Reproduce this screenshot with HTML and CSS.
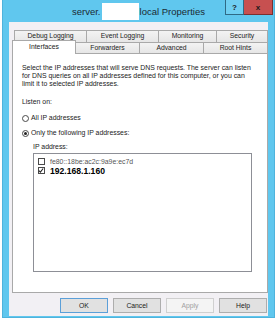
FILE: index.html
```html
<!DOCTYPE html>
<html lang="en">
<head>
  <meta charset="UTF-8">
  <title>server.local Properties</title>
  <link rel="stylesheet" href="styles.css">
</head>
<body>
  <div class="window">
    <div class="titlebar">
      <span></span>
      <div class="title">server.<span class="redact"></span>local Properties</div>
      <div class="caption-btns">
        <span class="cap cap-help">?</span>
        <span class="cap cap-close">x</span>
      </div>
    </div>

    <div class="panel">
      <div class="tabs">
        <div class="tab-row back">
          <div class="tab w-debug">Debug Logging</div>
          <div class="tab w-event">Event Logging</div>
          <div class="tab w-monitor">Monitoring</div>
          <div class="tab w-security">Security</div>
        </div>
        <div class="tab-row front">
          <div class="tab w-iface selected">Interfaces</div>
          <div class="tab w-fwd">Forwarders</div>
          <div class="tab w-adv">Advanced</div>
          <div class="tab w-root">Root Hints</div>
        </div>
      </div>

      <div class="page">
        <p class="intro">Select the IP addresses that will serve DNS requests. The server can listen<br>for DNS queries on all IP addresses defined for this computer, or you can<br>limit it to selected IP addresses.</p>
        <div class="listen">Listen on:</div>
        <div class="radio-row"><span class="radio"></span>All IP addresses</div>
        <div class="radio-row"><span class="radio on"></span>Only the following IP addresses:</div>
        <div class="ip-block">
          <div class="ip-label">IP address:</div>
          <div class="listbox">
            <div class="ip-row dim"><span class="check"></span>fe80::18be:ac2c:9a9e:ec7d</div>
            <div class="ip-row strong">
              <span class="check"><svg width="7" height="7" viewBox="0 0 7 7"><path d="M1 3.6 L2.8 5.4 L6 1.2" fill="none" stroke="#222" stroke-width="1.2"/></svg></span>192.168.1.160
            </div>
          </div>
        </div>
      </div>

      <div class="buttons">
        <button class="btn default">OK</button>
        <button class="btn">Cancel</button>
        <button class="btn" disabled>Apply</button>
        <button class="btn">Help</button>
      </div>
    </div>
  </div>
</body>
</html>
```

FILE: styles.css
```css
* {
  box-sizing: border-box;
}
body {
  margin: 0;
  background: #fff;
  font-family: 'Liberation Sans', Arial, sans-serif;
  color: #222;
}
.window {
  margin-left: 2px;
  width: 273px;
  height: 318px;
  background: #60c7ee;
  border: 1px solid #4fb3dc;
  border-top: none;
}
.titlebar {
  height: 22px;
  display: grid;
  grid-template-columns: 1fr auto 1fr;
  align-items: start;
}
.title {
  margin-top: 3px;
  font-size: 9.5px;
  line-height: 17px;
  color: #1b2a33;
  white-space: nowrap;
  display: flex;
  align-items: center;
}
.redact {
  display: inline-block;
  width: 37px;
  height: 17px;
  margin: 0 1px;
  background: #fff;
}
.caption-btns {
  justify-self: end;
  display: flex;
  margin-right: 1px;
}
.cap {
  height: 15px;
  display: flex;
  align-items: center;
  justify-content: center;
  font-size: 8px;
  font-weight: bold;
  color: #1a1a1a;
}
.cap-help {
  width: 19px;
  background: #6fcff2;
  border: 1px solid #2f6a86;
  border-top: none;
}
.cap-close {
  width: 29px;
  background: #c75050;
  border: 1px solid #7c2f2f;
  border-top: none;
  border-left: none;
}
.panel {
  margin: 0 6px;
  height: 294px;
  background: #f2f0f4;
  padding: 8px 0 0 3px;
}
.tabs {
  height: 23px;
  display: flex;
  flex-direction: column;
}
.tab-row {
  display: flex;
}
.tab-row.back {
  height: 12px;
  margin-left: 2px;
}
.tab-row.front {
  height: 11px;
  align-items: flex-end;
}
.tab {
  height: 100%;
  font-size: 6.8px;
  line-height: 10px;
  text-align: center;
  white-space: nowrap;
  background: linear-gradient(#f3f3f3, #e6e6e6);
  border: 1px solid #a9a9a9;
  border-left: none;
  border-bottom: none;
  color: #222;
}
.tab-row .tab:first-child {
  border-left: 1px solid #a9a9a9;
}
.w-debug { width: 73px; }
.w-event { width: 72px; }
.w-monitor { width: 58px; }
.w-security { width: 51px; }
.w-iface { width: 64px; }
.w-fwd { width: 64px; }
.w-adv { width: 64px; }
.w-root { width: 64px; }
.tab.selected {
  height: 14px;
  margin-bottom: -1px;
  position: relative;
  z-index: 1;
  background: #fff;
  line-height: 11px;
}
.page {
  width: 256px;
  height: 240px;
  background: #fff;
  border: 1px solid #a9a9a9;
  padding: 10px 9px 0 9px;
  font-size: 6.9px;
  line-height: 8px;
}
.intro {
  margin: 0;
  white-space: nowrap;
}
.listen {
  margin-top: 10px;
}
.radio-row {
  margin-top: 8px;
  display: flex;
  align-items: center;
  gap: 2px;
  height: 8px;
}
.radio-row + .radio-row {
  margin-top: 7px;
}
.radio {
  width: 7px;
  height: 7px;
  border: 1px solid #4a4a4a;
  border-radius: 50%;
  display: flex;
  align-items: center;
  justify-content: center;
  background: #fff;
}
.radio.on::after {
  content: '';
  width: 3px;
  height: 3px;
  border-radius: 50%;
  background: #222;
}
.ip-block {
  margin-top: 6px;
  padding-left: 11px;
}
.ip-label {
  height: 8px;
}
.listbox {
  margin-top: 2px;
  width: 219px;
  height: 119px;
  border: 1px solid #8d8f96;
  padding: 3px 0 0 4px;
}
.ip-row {
  display: flex;
  align-items: center;
  gap: 5px;
  height: 9px;
}
.ip-row.dim {
  color: #555;
}
.ip-row.strong {
  font-weight: bold;
  font-size: 8.6px;
  color: #000;
}
.check {
  width: 7px;
  height: 7px;
  border: 1px solid #4a4a4a;
  background: #fff;
  display: flex;
}
.check svg {
  margin: -1px 0 0 -1px;
}
.buttons {
  margin-top: 5px;
  padding-right: 1px;
  display: flex;
  justify-content: flex-end;
  gap: 5px;
}
.btn {
  width: 48px;
  height: 15px;
  padding: 0;
  font-family: inherit;
  font-size: 6.8px;
  color: #222;
  background: #e1e1e1;
  border: 1px solid #adadad;
}
.btn.default {
  border-color: #5b9fd8;
}
.btn:disabled {
  background: #f4f4f4;
  border-color: #d0d0d0;
  color: #a0a0a0;
}
```
